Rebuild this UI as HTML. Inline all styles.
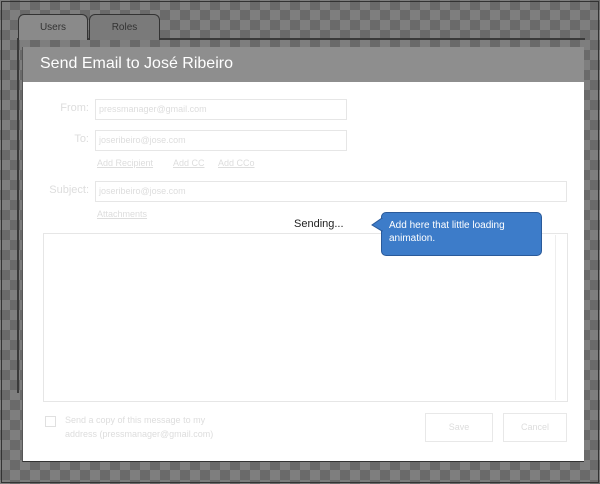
<!DOCTYPE html>
<html><head><style>
*{margin:0;padding:0;box-sizing:border-box}
body{width:600px;height:484px;position:relative;overflow:hidden;font-family:"Comic Sans MS","Liberation Sans",sans-serif;
background-color:#7a7a7a;background-image:repeating-conic-gradient(#6a6a6a 0 25%,#7e7e7e 0 50%);background-size:20px 20px;}
.frame{position:absolute;left:1px;top:1px;width:598px;height:482px;border:1px solid #333}
.panel{position:absolute;left:17px;top:38px;width:568px;height:355px;border:2px solid #3a3a3a;border-right:none;border-bottom:none}
.tab{position:absolute;top:14px;height:26px;border:1px solid #333;border-bottom:none;border-radius:6px 6px 0 0;font-size:10px;color:#333;text-align:center;line-height:26px}
.dlg{position:absolute;left:22px;top:47px;width:562px;height:415px;background:#fff;border-bottom:1px solid #333;border-left:1px solid #555}
.hdr{position:absolute;left:0;top:0;width:100%;height:35px;background:#8e8e8e;color:#fff;font-size:16px;line-height:33px;padding-left:17px}
.lbl{position:absolute;font-size:11px;color:#ddd;text-align:right}
.inp{position:absolute;border:1px solid #e6e6e6;height:21px;font-size:9px;color:#ddd;line-height:19px;padding-left:3px}
.lnk{position:absolute;font-size:9px;color:#ddd;text-decoration:underline}
.btn{position:absolute;border:1px solid #e8e8e8;height:29px;font-size:9px;color:#ddd;text-align:center;line-height:27px}
</style></head><body>
<div class="frame"></div>
<div class="panel"></div>
<div class="tab" style="left:18px;width:70px;background:#8a8a8a">Users</div>
<div class="tab" style="left:89px;width:71px;background:#7a7a7a">Roles</div>
<div class="dlg">
<div class="hdr">Send Email to José Ribeiro</div>
<div class="lbl" style="left:16px;top:55px;width:50px">From:</div>
<div class="inp" style="left:72px;top:52px;width:252px">pressmanager@gmail.com</div>
<div class="lbl" style="left:16px;top:86px;width:50px">To:</div>
<div class="inp" style="left:72px;top:83px;width:252px">joseribeiro@jose.com</div>
<div class="lnk" style="left:74px;top:111px">Add Recipient</div>
<div class="lnk" style="left:150px;top:111px">Add CC</div>
<div class="lnk" style="left:195px;top:111px">Add CCo</div>
<div class="lbl" style="left:6px;top:137px;width:60px">Subject:</div>
<div class="inp" style="left:72px;top:134px;width:472px">joseribeiro@jose.com</div>
<div class="lnk" style="left:74px;top:162px">Attachments</div>
<div style="position:absolute;left:271px;top:171px;font-size:11px;color:#222">Sending...</div>
<div style="position:absolute;left:20px;top:186px;width:525px;height:169px;border:1px solid #e6e6e6"></div>
<div style="position:absolute;left:532px;top:188px;width:11px;height:165px;border-left:1px solid #eee"></div>
<div style="position:absolute;left:22px;top:369px;width:11px;height:11px;border:1px solid #e0e0e0"></div>
<div style="position:absolute;left:42px;top:366px;font-size:9px;color:#ddd;line-height:14px">Send a copy of this message to my<br>address (pressmanager@gmail.com)</div>
<div class="btn" style="left:402px;top:366px;width:68px">Save</div>
<div class="btn" style="left:480px;top:366px;width:64px">Cancel</div>
</div>
<div style="position:absolute;left:381px;top:212px;width:161px;height:44px;background:#3d7cc9;border:1px solid #2a5a9a;border-radius:5px;color:#fff;font-family:'Liberation Sans',sans-serif;font-size:10px;line-height:13px;padding:6px 0 0 7px">Add here that little loading animation.</div>
<svg style="position:absolute;left:371px;top:218px" width="12" height="14"><path d="M11 0 L1 7 L11 13 Z" fill="#3d7cc9" stroke="#2a5a9a"/><path d="M11 1 L11 12" stroke="#3d7cc9" stroke-width="2"/></svg>
</body></html>
